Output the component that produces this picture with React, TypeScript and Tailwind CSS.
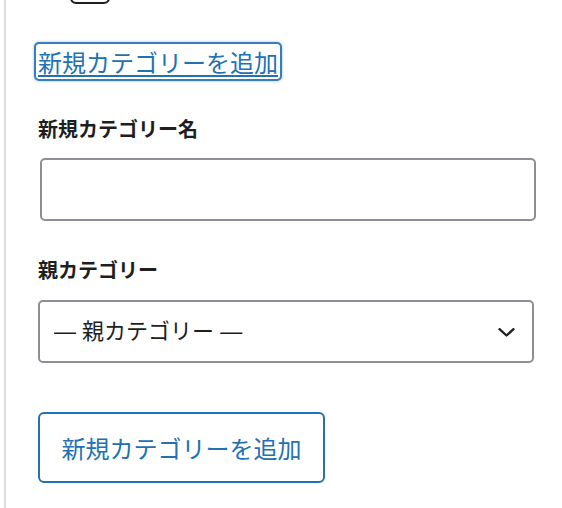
import React from 'react';

const font = { fontFamily: '"Noto Sans CJK JP", "Noto Sans", sans-serif' };
const selectFont = { fontFamily: '"Liberation Sans", "Noto Sans CJK JP", sans-serif' };

export default function App() {
  return (
    <div className="w-[562px] h-[508px] overflow-hidden bg-white" style={font}>
      <div className="ml-[4px] h-full border-l-2 border-[#dcdcde] pl-[32px] flex flex-col items-start">
        {/* checkbox cut off above */}
        <div className="mt-[-36px] ml-[32px] h-[40px] w-[40px] rounded-[6px] border-2 border-[#1e1e1e]" />

        {/* Toggle link (focused) */}
        <a
          href="#"
          className="mt-[40px] ml-[-2px] px-[2px] h-[35px] leading-[35px] text-[24px] text-[#2271b1] underline underline-offset-[3px] decoration-[1.5px] rounded-[3px] shadow-[0_0_0_2px_#3a7dbf,0_0_3px_2px_rgba(79,148,212,0.6)]"
        >
          新規カテゴリーを追加
        </a>

        {/* Category name */}
        <label className="mt-[36px] text-[20px] leading-[28px] font-semibold text-[#1e1e1e]">
          新規カテゴリー名
        </label>
        <input
          type="text"
          className="mt-[15px] ml-[2px] w-[496px] h-[63px] rounded-[5px] border-2 border-[#8c8f94] bg-white px-3 text-[22px] outline-none"
        />

        {/* Parent category */}
        <label className="mt-[35px] text-[20px] leading-[28px] font-semibold text-[#1e1e1e]">
          親カテゴリー
        </label>
        <div className="relative mt-[16px] w-[496px] h-[63px]">
          <select
            className="w-full h-full appearance-none rounded-[5px] border-2 border-[#8c8f94] bg-white pl-[14px] pr-12 text-[22px] text-[#1e1e1e] outline-none"
            style={selectFont}
            defaultValue="-1"
          >
            <option value="-1">— 親カテゴリー —</option>
          </select>
          <svg
            className="pointer-events-none absolute right-[19px] top-[28px]"
            width="17"
            height="9"
            viewBox="0 0 17 9"
            fill="none"
          >
            <path d="M1.5 1.2 L8.5 7.5 L15.5 1.2" stroke="#1e1e1e" strokeWidth="2.3" strokeLinecap="round" strokeLinejoin="round" />
          </svg>
        </div>

        {/* Submit */}
        <button
          type="button"
          className="mt-[49px] w-[287px] h-[71px] rounded-[6px] border-2 border-[#2271b1] bg-white text-[24px] text-[#2271b1] flex items-center justify-center"
          style={font}
        >
          新規カテゴリーを追加
        </button>
      </div>
    </div>
  );
}
